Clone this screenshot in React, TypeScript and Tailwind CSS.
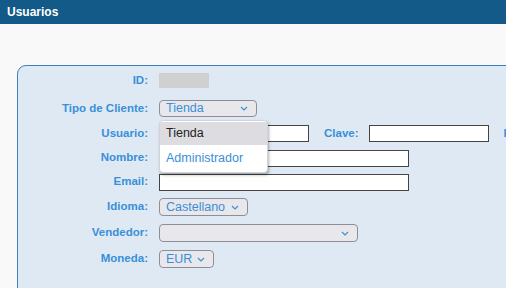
import React from "react";

const font = { fontFamily: '"Liberation Sans", Arial, sans-serif' };

function Chevron() {
  return (
    <svg width="8" height="5" viewBox="0 0 8 5" className="shrink-0">
      <path d="M1 1 L4 4 L7 1" fill="none" stroke="#3a8fd9" strokeWidth="1.2" />
    </svg>
  );
}

function Select({ value, w, h = "h-[18px]" }: { value: string; w: string; h?: string }) {
  return (
    <div
      className={`${w} ${h} flex items-center justify-between rounded-[4px] border border-[#8e8e99] bg-[#e8e8ec] pl-[6px] pr-[8px] text-[12.5px] text-[#3a8fd9]`}
    >
      <span className="leading-none">{value}</span>
      <Chevron />
    </div>
  );
}

function Row({ label, h, children }: { label: string; h: string; children?: React.ReactNode }) {
  return (
    <div className={`flex items-center ${h}`}>
      <div className="w-[130px] shrink-0 text-right text-[11.5px] font-bold text-[#3a8fd9]">{label}</div>
      <div className="ml-[11px] flex items-center">{children}</div>
    </div>
  );
}

export default function App() {
  return (
    <div className="h-[288px] w-[506px] overflow-hidden bg-[#f9f9f9]" style={font}>
      <div className="flex h-[24px] items-center bg-[#135a88] pl-[7px] text-[12px] font-bold text-white">
        Usuarios
      </div>
      <div className="relative ml-[17px] mt-[41px] h-[260px] w-[560px] rounded-tl-[9px] border border-[#3f7fc0] bg-[#dfe9f4] pt-[1px]">
        <Row label="ID:" h="h-[27px]">
          <div className="h-[15px] w-[50px] bg-[#d0d0d0]" />
        </Row>
        <Row label="Tipo de Cliente:" h="h-[29px]">
          <Select value="Tienda" w="w-[98px]" h="h-[17px]" />
        </Row>
        <Row label="Usuario:" h="h-[21px]">
          <div className="h-[17px] w-[150px] border border-[#444] bg-white" />
          <span className="ml-[15px] text-[11.5px] font-bold text-[#3a8fd9]">Clave:</span>
          <div className="ml-[10px] h-[17px] w-[120px] border border-[#444] bg-white" />
          <span className="ml-[15px] text-[11.5px] font-bold text-[#3a8fd9]">Fecha:</span>
        </Row>
        <Row label="Nombre:" h="h-[28px]">
          <div className="h-[17px] w-[250px] border border-[#444] bg-white" />
        </Row>
        <Row label="Email:" h="h-[20px]">
          <div className="h-[17px] w-[250px] border border-[#444] bg-white" />
        </Row>
        <Row label="Idioma:" h="h-[30px]">
          <Select value="Castellano" w="w-[89px]" />
        </Row>
        <Row label="Vendedor:" h="h-[22px]">
          <Select value="" w="w-[199px]" />
        </Row>
        <Row label="Moneda:" h="h-[30px]">
          <Select value="EUR" w="w-[55px]" />
        </Row>

        <div className="absolute left-[141px] top-[54px] w-[109px] rounded-[4px] border border-[#d4d4d8] bg-white py-[1px] text-[12.5px] shadow-[1px_2px_3px_rgba(0,0,0,0.3)]">
          <div className="flex h-[23px] items-center bg-[#dddce1] pl-[6px] text-[#222]">Tienda</div>
          <div className="flex h-[26px] items-center pl-[6px] text-[#3a8fd9]">Administrador</div>
        </div>
      </div>
    </div>
  );
}
